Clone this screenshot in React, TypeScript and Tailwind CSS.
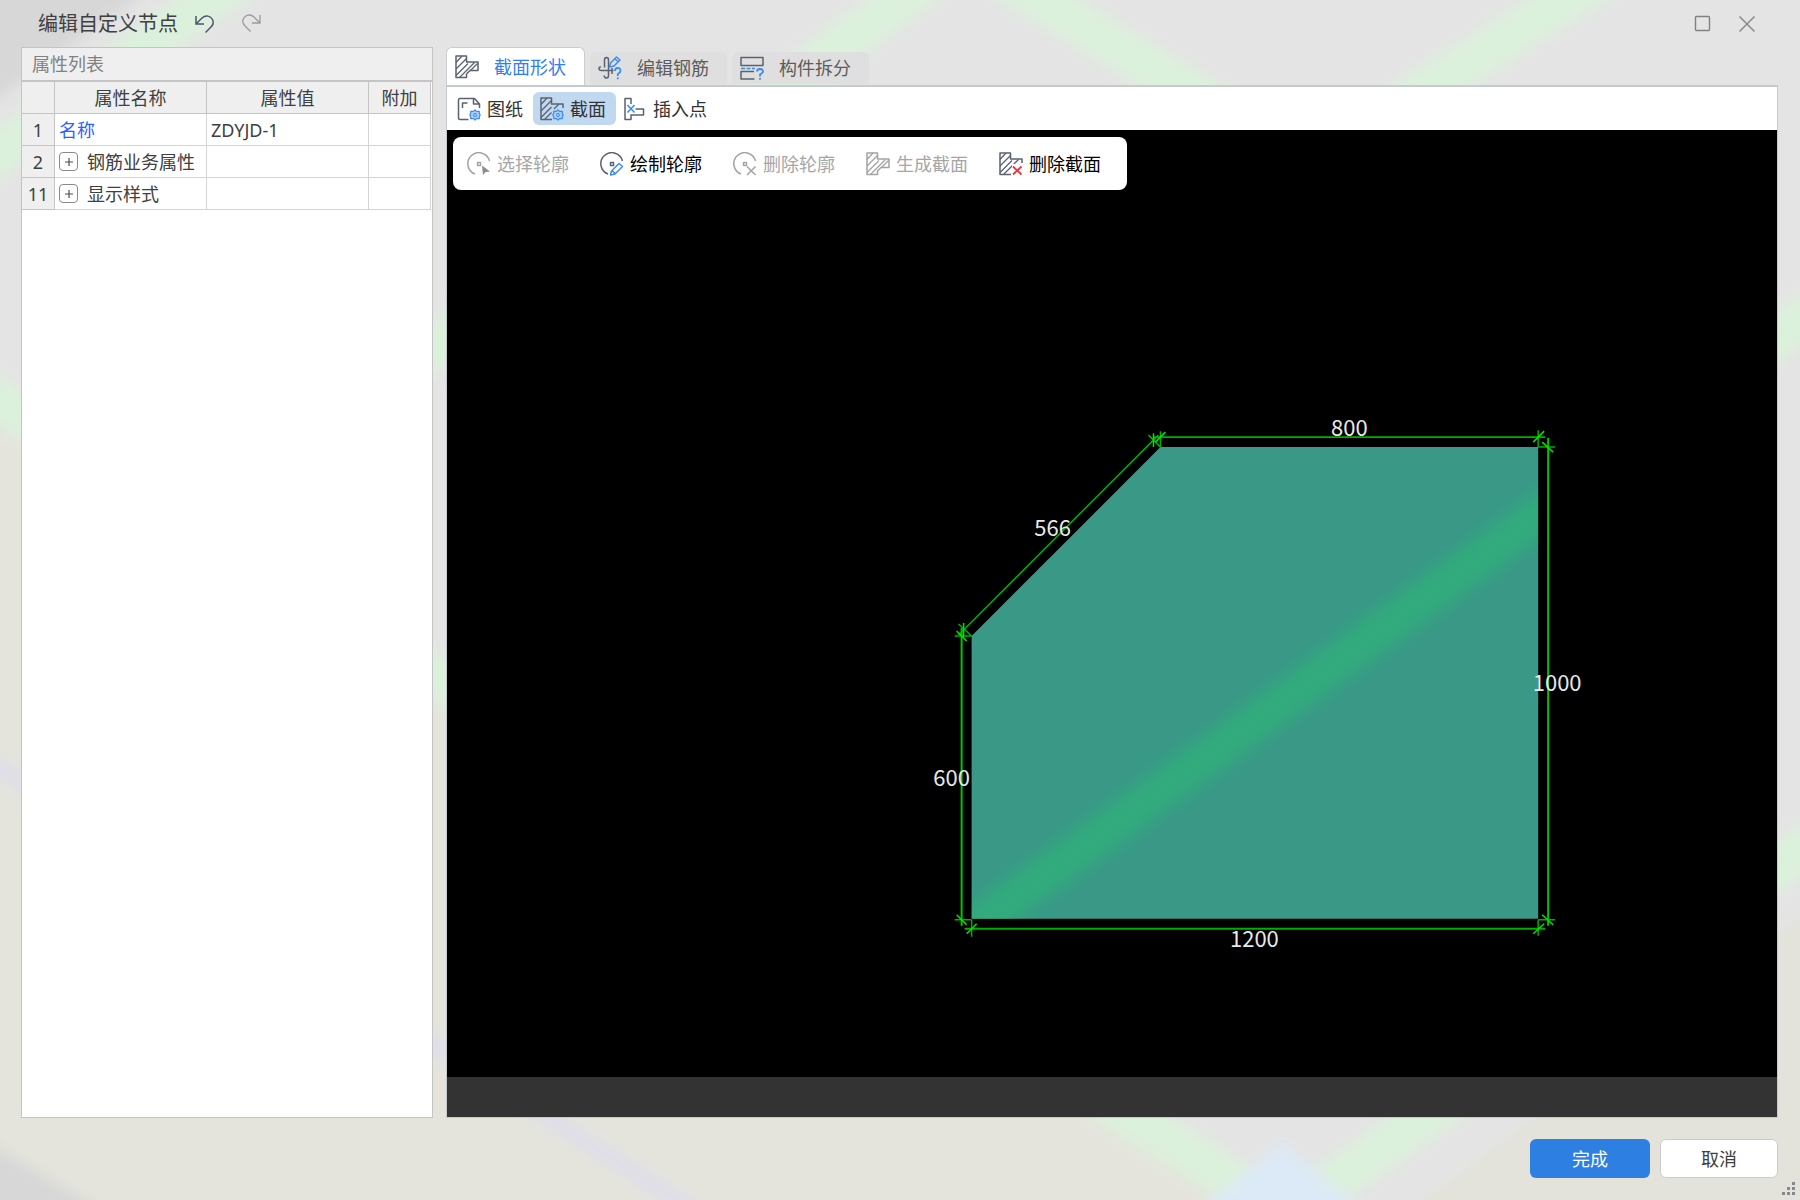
import type { ReactNode } from "react";

const INK = "#5b6270";
const BLUE = "#3b8cf0";
const GRAY = "#a3a3a3";

function Icon({ children, color = INK }: { children: ReactNode; color?: string }) {
  return (
    <svg viewBox="0 0 24 24" className="size-6 shrink-0" fill="none" stroke={color} strokeWidth="1.5" strokeLinejoin="round" aria-hidden="true">
      {children}
    </svg>
  );
}

function HatchIcon({ color }: { color?: string }) {
  return (
    <Icon color={color}>
      <path d="M1 1H11.5V7H23V15.5H15L11.5 19V22.5H1Z" />
      <path d="M1 7.5L7 1M1 14L11.5 3.5M1 20.500L13 8.500M4.500 22.5L19.500 7.500M15.500 15.5L22.5 8.500" strokeWidth="1.3" />
    </Icon>
  );
}

function HatchCut() {
  return (
    <>
      <path d="M12 22.5H1V1H11.5V7H23V11" />
      <path d="M1 7.5L7 1M1 14L11.5 3.5M1 20.500L13 8.500M4.500 22.5L19.500 7.500" strokeWidth="1.3" />
    </>
  );
}

function Gear({ x, y }: { x: number; y: number }) {
  return (
    <g transform={`translate(${x} ${y})`} stroke={BLUE} strokeWidth="1.2">
      <path d="M0 -5L1.5 -3.6H4.3V-1.6L5.2 0L4.3 1.6V3.6H1.5L0 5L-1.5 3.6H-4.3V1.6L-5.2 0L-4.3 -1.6V-3.6H-1.5Z" fill="#a9cdf8" />
      <circle r="1.3" fill="#fff" />
    </g>
  );
}

function SectionIcon() {
  return (
    <Icon>
      <path d="M12 22.5H1V1H11.5V7H23V11" />
      <path d="M1 7.5L7 1M1 14L11.5 3.5M1 20.500L11.500 10M4.500 22.5L11.500 15.500M14 12L19 7" strokeWidth="1.3" />
      <Gear x={18} y={18} />
    </Icon>
  );
}

function DeleteSectionIcon() {
  return (
    <Icon>
      <HatchCut />
      <path d="M13 12H24V24H13Z" fill="#fff" stroke="none" />
      <path d="M14 14.500L22.500 22.500M22.500 14.500L14 22.500" stroke="#e5383b" strokeWidth="1.8" />
    </Icon>
  );
}

function SheetIcon() {
  return (
    <Icon>
      <path d="M11.500 22.500H3Q1.500 22.500 1.500 21V3Q1.500 1.500 3 1.500H17.500L22.500 7V11M16.500 1.500V7H22.500M5.500 11V6H10.500" />
      <Gear x={18} y={18} />
    </Icon>
  );
}

function InsertIcon() {
  return (
    <Icon>
      <path d="M2 9V1.500H8V7M2 15V22.500H8V18H20.500V12H12.500M2 9V15" />
      <path d="M4.500 8L11.500 15.500M11.500 8L4.500 15.500" stroke={BLUE} strokeWidth="1.6" />
    </Icon>
  );
}

function RebarIcon() {
  return (
    <Icon>
      <path d="M15.500 14.500H3.500Q1 14.500 1 12.500T3 11M10.500 4V19.500Q10.500 22 8.500 22T6 19.500M10.500 4Q10.500 1.500 8.500 1.500T6.500 4V11.500M14 12V18" />
      <path d="M11.500 11L12.500 7L18.500 1L22 4L16 10ZM17 3L20.500 6" stroke={BLUE} />
      <path d="M17 15Q17 12 19.800 12T22.500 15Q22.500 16.500 19.800 18V20M19.800 21.500V23.200" stroke={BLUE} strokeWidth="1.8" />
    </Icon>
  );
}

function SplitIcon() {
  return (
    <Icon>
      <path d="M1 1.500H23V9.500H1ZM14 15.500H1V23H14.500" />
      <path d="M1 12.500H15" stroke={BLUE} strokeDasharray="4 1.500" />
      <path d="M17 15.500Q17 13 20 13T23 15.500Q23 17 20 18.500V20.500M20 22V23.700" stroke={BLUE} strokeWidth="1.8" />
    </Icon>
  );
}

function Outline({ color = INK, children }: { color?: string; children: ReactNode }) {
  return (
    <Icon color={color}>
      <path d="M22.500 9A11 11 0 1 0 8 22" />
      <rect x="10.500" y="10.500" width="3" height="3" />
      {children}
    </Icon>
  );
}

const PencilOutlineIcon = () => (
  <Outline>
    <path d="M10.500 23L11.500 19L19 11.500L22.500 14.500L15 22ZM12.500 19L15 21.500" stroke={BLUE} />
  </Outline>
);

type Item = { label: string; icon: ReactNode; on?: boolean; disabled?: boolean };

const tabs: Item[] = [
  { label: "截面形状", icon: <HatchIcon />, on: true },
  { label: "编辑钢筋", icon: <RebarIcon /> },
  { label: "构件拆分", icon: <SplitIcon /> },
];

const tools: Item[] = [
  { label: "图纸", icon: <SheetIcon /> },
  { label: "截面", icon: <SectionIcon />, on: true },
  { label: "插入点", icon: <InsertIcon /> },
];

const actions: Item[] = [
  {
    label: "选择轮廓",
    disabled: true,
    icon: (
      <Outline color={GRAY}>
        <path d="M15 13.500L23 19.500L18.500 20L16 23Z" fill="#8c8c8c" stroke="none" />
      </Outline>
    ),
  },
  { label: "绘制轮廓", icon: <PencilOutlineIcon /> },
  {
    label: "删除轮廓",
    disabled: true,
    icon: (
      <Outline color={GRAY}>
        <path d="M14 14.500L22.500 23M22.500 14.500L14 23" />
      </Outline>
    ),
  },
  { label: "生成截面", icon: <HatchIcon color={GRAY} />, disabled: true },
  { label: "删除截面", icon: <DeleteSectionIcon /> },
];

function Backdrop() {
  return (
    <svg className="absolute inset-0 size-full" viewBox="0 0 1800 1200" preserveAspectRatio="none" aria-hidden="true">
      <defs>
        <filter id="soft" x="-5%" y="-5%" width="110%" height="110%">
          <feGaussianBlur stdDeviation="7" />
        </filter>
      </defs>
      <rect width="1800" height="1200" fill="#e4e4e4" />
      <g filter="url(#soft)">
        <path d="M-40 -40H190L-40 125Z" fill="#d7d7d7" />
        <path d="M-40 385L1330 1240H-40Z" fill="#e4e4dc" />
        <path d="M1370 1240L1840 887V1240Z" fill="#e3e3db" />
        <path d="M-40 1125L150 1240H-40Z" fill="#d7d7d8" />
        <g fill="none" stroke="#dcf1dc" strokeWidth="42">
          <path d="M265 -40L-40 181" />
          <path d="M-40 376L1250 1192" />
          <path d="M955 -40L410 366" />
          <path d="M975 -40L1240 122" />
          <path d="M1630 -40L1400 105" />
          <path d="M1840 291L1700 393" />
          <path d="M1840 823L1290 1213" />
        </g>
        <path d="M-40 743L740 1240" fill="none" stroke="#dfdfe8" strokeWidth="20" />
        <path d="M1282 1143L1370 1215H1195Z" fill="#dceaf7" />
      </g>
    </svg>
  );
}

function Drawing() {
  return (
    <svg className="absolute inset-0 size-full" viewBox="447 130 1331 947" role="img" aria-label="截面轮廓">
      <defs>
        <clipPath id="shape">
          <path d="M1161 447H1539V919H972V636Z" />
        </clipPath>
        <filter id="glow" x="-10%" y="-10%" width="120%" height="120%">
          <feGaussianBlur stdDeviation="7" />
        </filter>
      </defs>
      <path d="M1161 447H1539V919H972V636Z" fill="#399986" />
      <g clipPath="url(#shape)">
        <path d="M940 952L1600 471" stroke="#30aa7d" strokeWidth="38" filter="url(#glow)" />
      </g>
      <g fill="none" stroke="#00b000" strokeWidth="2">
        <path d="M1154 437H1546M965 929H1546" />
        <path d="M1549 438V926M962 628V926" stroke="#00c400" />
        <path d="M1159 435L959 635" strokeWidth="1.5" />
        <path d="M1161 447V431M1539 447V430M972 920V937M1539 920V936" strokeWidth="1.5" />
        <path d="M1539 447H1556M1539 920H1556M972 636H955M972 920H955" strokeWidth="1.5" />
        <path d="M1161 447L1149 435M972 636L959 624" strokeWidth="1.5" />
      </g>
      <g fill="none" stroke="#00e400" strokeWidth="1.500">
        <path d="M1156 442L1166 432M1534 442L1545 431M967 934L977 924M1534 934L1545 924" />
        <path d="M1543 442L1554 452M1543 915L1554 925M957 631L967 641M957 915L967 925" />
        <path d="M1154 433V447M964 623V637" />
      </g>
      <g className="font-['Noto_Sans_CJK_SC',sans-serif]" fill="#e8e8e8" fontSize="22" textAnchor="middle">
        <text x="1350" y="436">800</text>
        <text x="1053" y="536">566</text>
        <text x="1558" y="691">1000</text>
        <text x="952" y="786">600</text>
        <text x="1255" y="947">1200</text>
      </g>
    </svg>
  );
}

const rowHead = "h-8 border-r border-b border-[#c4c4c4] bg-[#efefef] text-center font-normal";
const cell = "h-8 border-r border-b border-[#d4d4d4] p-0";
const groups = [
  { id: 2, label: "钢筋业务属性" },
  { id: 11, label: "显示样式" },
];

function Properties() {
  return (
    <section aria-label="属性列表" className="flex w-[412px] shrink-0 flex-col border border-[#c4c4c4] bg-white">
      <h2 className="flex h-[34px] shrink-0 items-center border-b-2 border-[#c4c4c4] bg-[#efefef] pl-[10px] text-[#828282]">属性列表</h2>
      <table className="w-[409px] table-fixed border-separate border-spacing-0 text-[#404040]">
        <colgroup>
          <col className="w-[33px]" />
          <col className="w-[152px]" />
          <col className="w-[162px]" />
          <col className="w-[62px]" />
        </colgroup>
        <thead>
          <tr>
            <td className={rowHead} />
            <th className={rowHead}>属性名称</th>
            <th className={rowHead}>属性值</th>
            <th className={rowHead}>附加</th>
          </tr>
        </thead>
        <tbody>
          <tr>
            <th className={rowHead}>1</th>
            <td className={cell}>
              <label htmlFor="node-name" className="block pl-1 text-[#2b62ff]">名称</label>
            </td>
            <td className={cell}>
              <input id="node-name" defaultValue="ZDYJD-1" className="block w-full bg-transparent pl-1 outline-none" />
            </td>
            <td className={cell} />
          </tr>
          {groups.map((g) => (
            <tr key={g.id}>
              <th className={rowHead}>{g.id}</th>
              <td className={cell}>
                <div className="flex items-center gap-[9px] pl-1 whitespace-nowrap">
                  <button type="button" aria-label={`展开${g.label}`} className="flex size-[19px] shrink-0 items-center justify-center rounded-[4px] border border-[#8a8a8a]">
                    <svg viewBox="0 0 8 8" className="size-2" stroke="#4a4f60" strokeWidth="1.200" aria-hidden="true">
                      <path d="M4 0V8M0 4H8" />
                    </svg>
                  </button>
                  <span>{g.label}</span>
                </div>
              </td>
              <td className={cell} />
              <td className={cell} />
            </tr>
          ))}
        </tbody>
      </table>
    </section>
  );
}

export default function App() {
  return (
    <div className="relative flex h-screen flex-col overflow-hidden font-['Noto_Sans','Noto_Sans_CJK_SC',sans-serif] text-lg leading-6">
      <Backdrop />
      <header className="relative flex h-[47px] shrink-0 items-center pr-[44px] pl-[38px]">
        <h1 className="text-xl text-[#404040]">编辑自定义节点</h1>
        <button type="button" aria-label="撤销" className="ml-4">
          <svg viewBox="0 0 22 22" className="size-[22px]" fill="none" stroke="#4f566c" strokeWidth="1.500" aria-hidden="true">
            <path d="M2 3V11H10M2.500 10.500L8 5C12 1.500 16.500 3 18.500 6.500C20 9.500 19 12 17 14L11.500 19.500" />
          </svg>
        </button>
        <button type="button" aria-label="重做" className="ml-6">
          <svg viewBox="0 0 22 22" className="size-[22px]" fill="none" stroke="#9b9b9b" strokeWidth="1.300" aria-hidden="true">
            <path d="M20 2V10H12M19.500 9.500L14 4C10 .500 5.500 2 3.500 5.500C2 8.500 3 11 5 13L10.500 18.500" />
          </svg>
        </button>
        <button type="button" aria-label="最大化" className="ml-auto">
          <svg viewBox="0 0 18 18" className="size-[18px]" fill="none" stroke="#808080" strokeWidth="1.400" aria-hidden="true">
            <rect x="1.500" y="1.500" width="14" height="14" rx="1" />
          </svg>
        </button>
        <button type="button" aria-label="关闭" className="ml-[26px]">
          <svg viewBox="0 0 18 18" className="size-[18px]" fill="none" stroke="#8a8a8a" strokeWidth="1.500" aria-hidden="true">
            <path d="M1.500 1.500L16.500 16.500M16.500 1.500L1.500 16.500" />
          </svg>
        </button>
      </header>

      <main className="relative flex min-h-0 flex-1 gap-[13px] pr-[22px] pl-[21px]">
        <Properties />
        <div className="flex min-w-0 flex-1 flex-col">
          <div role="tablist" className="flex h-[38px] shrink-0 items-end gap-[5px]">
            {tabs.map((t) =>
              t.on ? (
                <button key={t.label} role="tab" aria-selected="true" type="button" className="flex h-[38px] items-center gap-[15px] rounded-t-md border border-b-0 border-[#c8cdd0] bg-white pr-[18px] pl-2 text-[#3280ee]">
                  {t.icon}
                  {t.label}
                </button>
              ) : (
                <button key={t.label} role="tab" aria-selected="false" type="button" className="mb-px flex h-8 items-center gap-[15px] rounded-t-md bg-[#dfdfdf] pr-[18px] pl-2 text-[#5c5c5c]">
                  {t.icon}
                  {t.label}
                </button>
              ),
            )}
          </div>
          <div className="flex min-h-0 flex-1 flex-col border border-t-2 border-[#c5cacd] bg-white">
            <div role="toolbar" aria-label="截面工具" className="flex h-[43px] shrink-0 items-center pl-[3px] text-[#333333]">
              {tools.map((t) => (
                <button
                  key={t.label}
                  type="button"
                  className={t.on ? "flex h-[33px] items-center gap-[6px] rounded-md bg-[#c1d8f1] pr-[10px] pl-[7px]" : "flex h-[33px] items-center gap-[6px] pr-[10px] pl-[7px]"}
                >
                  {t.icon}
                  {t.label}
                </button>
              ))}
            </div>
            <div className="relative min-h-0 flex-1 bg-black">
              <Drawing />
              <div role="toolbar" aria-label="轮廓操作" className="absolute top-[7px] left-[6px] flex h-[53px] items-center gap-[31px] rounded-lg bg-white pr-[26px] pl-[14px]">
                {actions.map((a) => (
                  <button key={a.label} type="button" disabled={a.disabled} className="flex items-center gap-[6px] text-black disabled:text-[#a6a6a6]">
                    {a.icon}
                    {a.label}
                  </button>
                ))}
              </div>
            </div>
            <div className="h-10 shrink-0 bg-[#333333]" />
          </div>
        </div>
      </main>

      <footer className="relative flex h-[82px] shrink-0 items-start justify-end gap-[10px] px-[22px] pt-[21px]">
        <button type="button" className="h-[39px] w-[120px] rounded-md bg-[#2d80e2] text-white">完成</button>
        <button type="button" className="h-[39px] w-[118px] rounded-md border border-[#cccccc] bg-white text-[#404040]">取消</button>
        <svg viewBox="0 0 13 13" className="absolute right-[5px] bottom-[5px] size-[13px]" fill="#858a90" aria-hidden="true">
          <path d="M10 0h3v3h-3zM10 5h3v3h-3zM5 5h3v3h-3zM10 10h3v3h-3zM5 10h3v3h-3zM0 10h3v3h-3z" />
        </svg>
      </footer>
    </div>
  );
}
